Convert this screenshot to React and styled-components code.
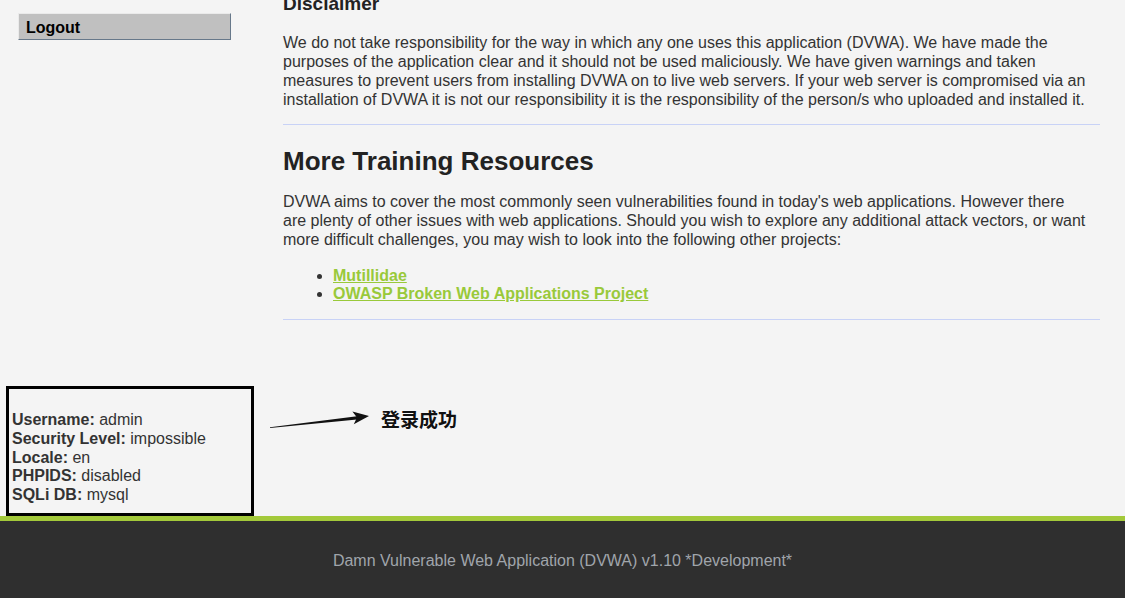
import styled, { createGlobalStyle } from 'styled-components';

// Sidfärger
const pageBg = '#f4f4f4';
const textColor = '#333';
const linkGreen = '#99c93a';
const footerBg = '#2f2f2f';

const GlobalStyle = createGlobalStyle`
  html, body {
    margin: 0;
    padding: 0;
    background: ${pageBg};
    font-family: "Liberation Sans", Arial, sans-serif;
    color: ${textColor};
    overflow: hidden;
  }
`;

const Page = styled.div`
  display: flex;
  flex-direction: column;
  min-height: 598px;
`;

const Main = styled.div`
  display: grid;
  grid-template-columns: 213px 817px;
  column-gap: 52px;
  padding: 13px 0 0 18px;
`;

const Sidebar = styled.div`
  display: flex;
  flex-direction: column;
`;

const MenuButton = styled.div`
  height: 25px;
  line-height: 27px;
  padding-left: 7px;
  background: #c0c0c0;
  border: 1px solid;
  border-color: #eaeaea #67788a #67788a #eaeaea;
  font-weight: bold;
  font-size: 16px;
  color: #000;
`;

// sidan är scrollad, rubriken är delvis dold
const Content = styled.div`
  margin-top: -20px;
`;

const SubHeading = styled.h3`
  margin: 0;
  font-size: 19px;
  line-height: 22px;
  color: #222;
`;

const Heading = styled.h2`
  margin: 21px 0 0;
  font-size: 26px;
  line-height: 30px;
  color: #222;
`;

const Text = styled.p`
  margin: ${(p) => p.$top || 0}px 0 0;
  font-size: 16px;
  line-height: 19px;
`;

const Rule = styled.hr`
  margin: ${(p) => p.$top}px 0 0;
  border: none;
  border-top: 1px solid #c8d2f6;
  height: 0;
`;

const LinkList = styled.ul`
  margin: 18px 0 0;
  padding-left: 50px;
  font-size: 16px;
  line-height: 18px;
`;

const Link = styled.a`
  color: ${linkGreen};
  font-weight: bold;
  text-decoration: underline;
`;

const Bottom = styled.div`
  display: flex;
  align-items: flex-start;
  margin-top: 66px;
  padding-left: 6px;
`;

const InfoBox = styled.div`
  width: 239px;
  height: 102px;
  border: 3px solid #000;
  padding: 22px 0 0 3px;
  font-size: 16px;
  line-height: 18.75px;
`;

const Label = styled.b`
  font-weight: bold;
`;

const Note = styled.div`
  display: flex;
  align-items: center;
  margin: 19px 0 0 15px;
`;

const NoteText = styled.span`
  margin-left: 10px;
  font-family: "Noto Sans CJK SC", sans-serif;
  font-weight: bold;
  font-size: 19px;
  color: #111;
  text-shadow: 0 0 2px #fff;
`;

const Footer = styled.div`
  flex: 1;
  border-top: 5px solid #a3c93a;
  background: ${footerBg};
  color: #a0a5ab;
  text-align: center;
  font-size: 16px;
  line-height: 19px;
  padding-top: 30px;
`;

const Arrow = () => (
  <svg width="102" height="22" viewBox="0 0 102 22">
    <polygon points="1,19.2 88,8.2 88,11.4 1,19.9" fill="#111" />
    <polygon points="100,8 83.4,3.6 88,9.6 84.8,16.2" fill="#111" />
  </svg>
);

const info = [
  ['Username', 'admin'],
  ['Security Level', 'impossible'],
  ['Locale', 'en'],
  ['PHPIDS', 'disabled'],
  ['SQLi DB', 'mysql'],
];

const App = () => (
  <>
    <GlobalStyle />
    <Page>
      <Main>
        <Sidebar>
          <MenuButton>Logout</MenuButton>
        </Sidebar>
        <Content>
          <SubHeading>Disclaimer</SubHeading>
          <Text $top={18}>
            We do not take responsibility for the way in which any one uses this application (DVWA). We have made the
            purposes of the application clear and it should not be used maliciously. We have given warnings and taken
            measures to prevent users from installing DVWA on to live web servers. If your web server is compromised via an
            installation of DVWA it is not our responsibility it is the responsibility of the person/s who uploaded and installed it.
          </Text>
          <Rule $top={15} />
          <Heading>More Training Resources</Heading>
          <Text $top={16}>
            DVWA aims to cover the most commonly seen vulnerabilities found in today's web applications. However there
            <br />
            are plenty of other issues with web applications. Should you wish to explore any additional attack vectors, or want
            <br />
            more difficult challenges, you may wish to look into the following other projects:
          </Text>
          <LinkList>
            <li><Link href="#">Mutillidae</Link></li>
            <li><Link href="#">OWASP Broken Web Applications Project</Link></li>
          </LinkList>
          <Rule $top={16} />
        </Content>
      </Main>
      <Bottom>
        <InfoBox>
          {info.map(([label, value]) => (
            <div key={label}>
              <Label>{label}:</Label> {value}
            </div>
          ))}
        </InfoBox>
        <Note>
          <Arrow />
          <NoteText>登录成功</NoteText>
        </Note>
      </Bottom>
      <Footer>Damn Vulnerable Web Application (DVWA) v1.10 *Development*</Footer>
    </Page>
  </>
);

export default App;
